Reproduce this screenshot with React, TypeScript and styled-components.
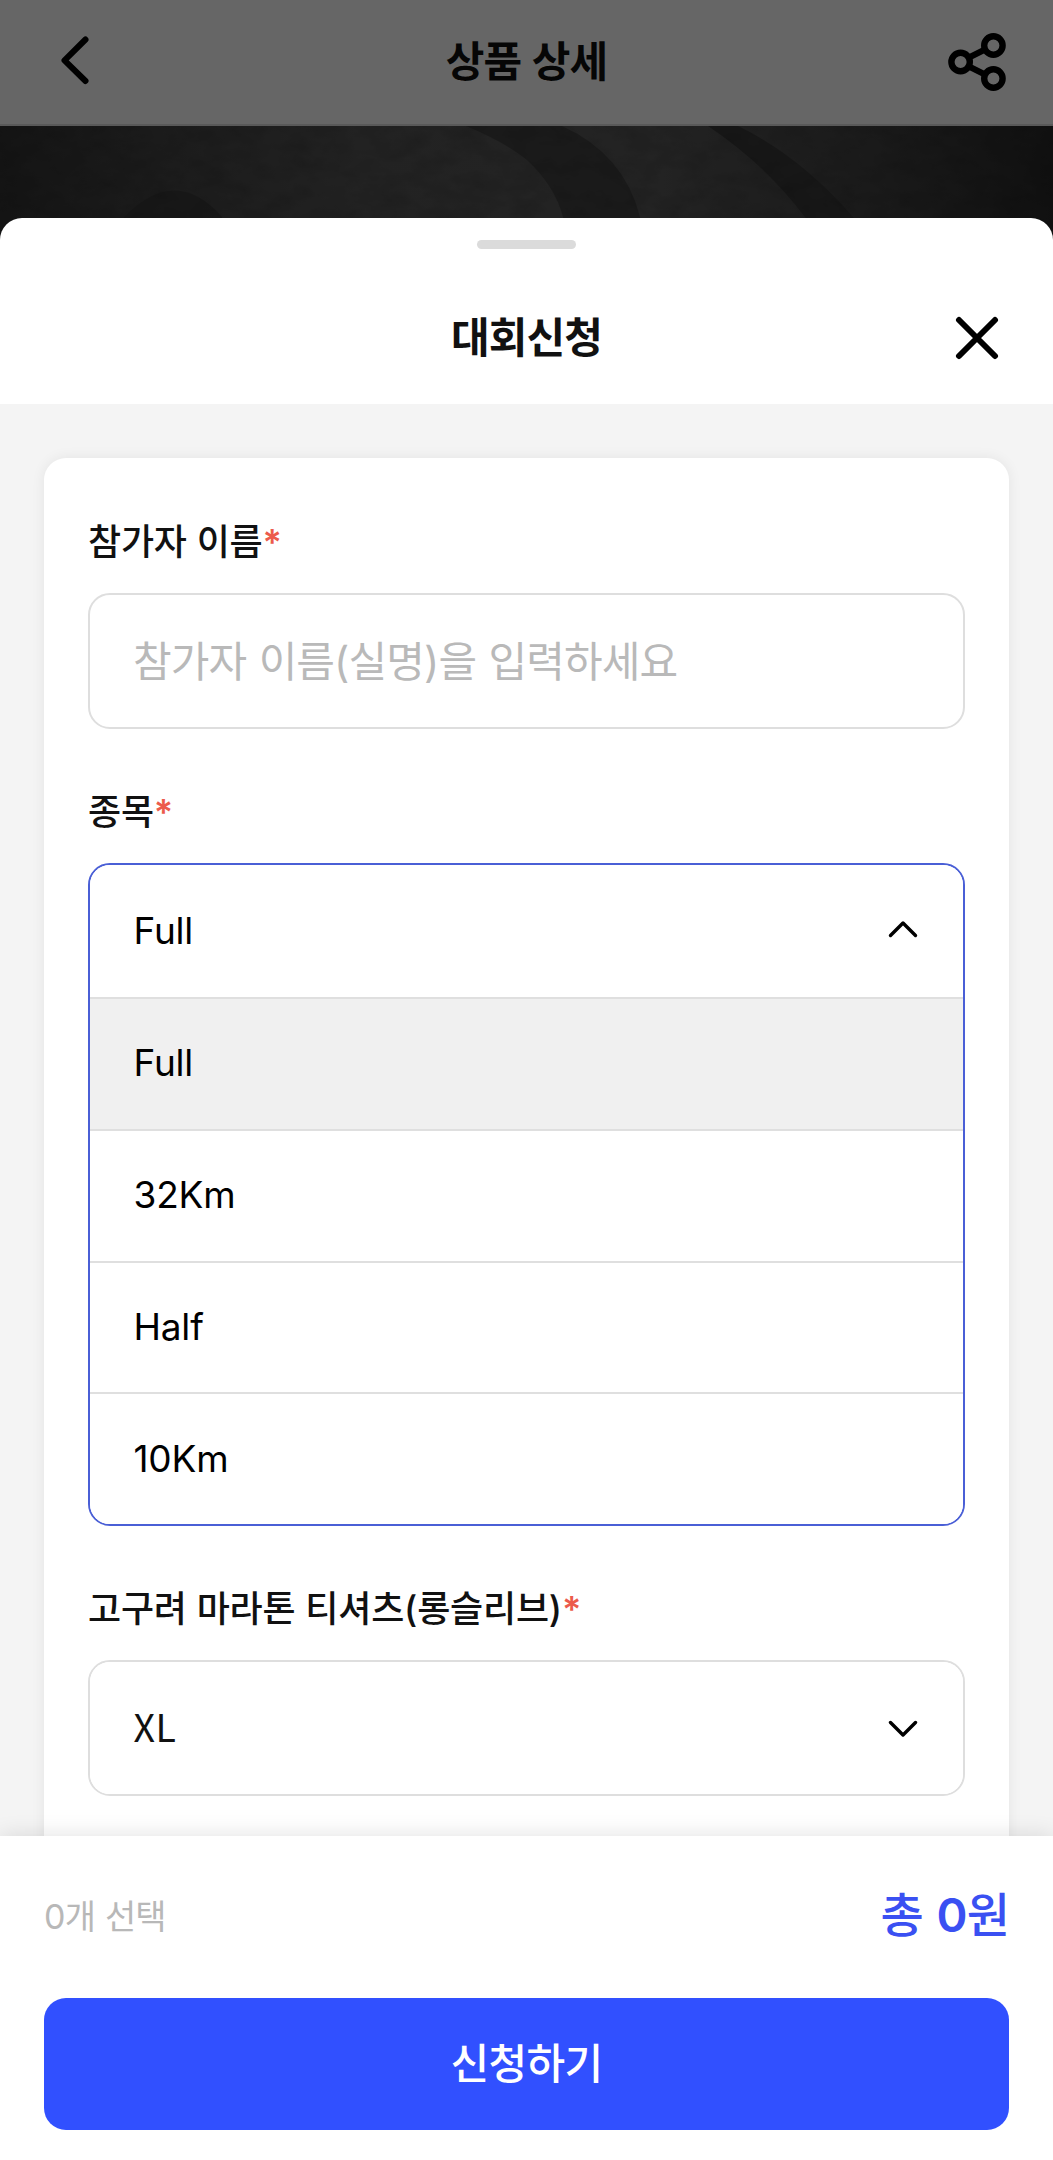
import React, { useState } from "react";
import styled, { createGlobalStyle, css } from "styled-components";

const GlobalStyle = createGlobalStyle`
  * { box-sizing: border-box; }
  body {
    margin: 0;
    background: #ffffff;
    font-family: Inter, "Noto Sans CJK KR", sans-serif;
    color: #111111;
  }
  button, input { font-family: inherit; color: inherit; }
`;

const Screen = styled.div`
  width: 1053px;
  height: 2160px;
  display: flex;
  flex-direction: column;
  overflow: hidden;
  background: #fff;
`;

const Backdrop = styled.div`
  position: relative;
  flex: none;
  height: 250px;
  &::after {
    content: "";
    position: absolute;
    inset: 0;
    background: rgba(0, 0, 0, 0.6);
  }
`;

const TopBar = styled.header`
  height: 126px;
  display: grid;
  grid-template-columns: 150px 1fr 150px;
  align-items: center;
  background: #fff;
  border-bottom: 2px solid #dedede;
`;

const IconButton = styled.button<{ $side: "left" | "right"; $inset: number }>`
  border: 0;
  padding: 0;
  background: none;
  display: flex;
  justify-content: ${(p) => (p.$side === "left" ? "flex-start" : "flex-end")};
  padding-${(p) => p.$side}: ${(p) => p.$inset}px;
`;

const BarTitle = styled.h1`
  margin: 0;
  text-align: center;
  font-size: 42px;
  line-height: 60px;
  font-weight: 700;
  letter-spacing: -0.9px;
  word-spacing: 1.5px;
`;

const Hero = styled.svg`
  display: block;
  width: 1053px;
  height: 124px;
`;

const Sheet = styled.section`
  position: relative;
  flex: 1;
  min-height: 0;
  margin-top: -32.5px;
  display: flex;
  flex-direction: column;
  background: #fff;
  border-radius: 22px 22px 0 0;
  overflow: hidden;
`;

const SheetHeader = styled.div`
  flex: none;
  height: 186.5px;
  padding-top: 22.5px;
  display: flex;
  flex-direction: column;
  align-items: center;
`;

const Handle = styled.div`
  width: 99px;
  height: 9px;
  border-radius: 5px;
  background: #dbdbdb;
`;

const SheetTitleRow = styled.div`
  width: 100%;
  margin-top: 59px;
  display: grid;
  grid-template-columns: 150px 1fr 150px;
  align-items: center;
`;

const SheetTitle = styled(BarTitle).attrs({ as: "h2" })`
  grid-column: 2;
`;

const SheetBody = styled.div`
  flex: 1;
  min-height: 0;
  overflow: hidden;
  padding: 54px 44px 0;
  background: #f4f4f4;
`;

const Card = styled.div`
  height: 1500px;
  padding: 60px 44px;
  background: #fff;
  border-radius: 22px;
  box-shadow: 0 0 14px rgba(0, 0, 0, 0.07);
`;

const Field = styled.div`
  display: flex;
  flex-direction: column;
  margin-bottom: 59px;
`;

const Label = styled.label`
  height: 48px;
  margin-bottom: 27px;
  font-size: 36px;
  line-height: 48px;
  font-weight: 500;
  letter-spacing: -0.2px;
  word-spacing: 0.5px;
  white-space: nowrap;
`;

const Required = styled.span`
  color: #ec5b4c;
  font-weight: 600;
`;

const TextInput = styled.input`
  width: 100%;
  height: 136px;
  padding: 0 43px;
  border: 2px solid #dedede;
  border-radius: 22px;
  outline: none;
  background: #fff;
  font-size: 42px;
  letter-spacing: -0.9px;
  word-spacing: 1.5px;
  &::placeholder {
    color: #b9b9b9;
    opacity: 1;
  }
`;

const SelectBox = styled.div<{ $open: boolean }>`
  border: 2px solid ${(p) => (p.$open ? "#4a5fd6" : "#dedede")};
  border-radius: 22px;
  background: #fff;
  overflow: hidden;
`;

const rowText = css`
  width: 100%;
  display: flex;
  align-items: center;
  border: 0;
  padding: 0 45px 2px 43.5px;
  color: #000;
  font-size: 37px;
  letter-spacing: -0.2px;
  text-align: left;
`;

const SelectHead = styled.button`
  ${rowText}
  height: 132px;
  justify-content: space-between;
  background: #fff;
`;

const SizeValue = styled.span`
  font-family: "Noto Sans CJK KR", sans-serif;
  font-size: 37.5px;
  letter-spacing: 0.4px;
  line-height: 50px;
  padding-bottom: 3px;
  color: #111;
`;

const Option = styled.button<{ $selected: boolean }>`
  ${rowText}
  height: 131.75px;
  border-top: 2px solid #dfdfdf;
  background: ${(p) => (p.$selected ? "#f0f0f0" : "#fff")};
`;

const Footer = styled.footer`
  position: relative;
  flex: none;
  height: 324px;
  padding: 48px 44px 30px;
  display: flex;
  flex-direction: column;
  justify-content: space-between;
  background: #fff;
  box-shadow: 0 0 22px rgba(0, 0, 0, 0.12);
`;

const Summary = styled.div`
  display: flex;
  align-items: center;
  justify-content: space-between;
  height: 60px;
`;

const Count = styled.span`
  font-size: 34px;
  font-weight: 400;
  letter-spacing: -0.8px;
  word-spacing: 1px;
  color: #b8b8b8;
`;

const Total = styled.strong`
  font-size: 47px;
  line-height: 58px;
  font-weight: 500;
  letter-spacing: -0.9px;
  word-spacing: 2px;
  padding-top: 2px;
  color: #3a50f2;
`;

const Amount = styled.span`
  font-weight: 600;
`;

const Submit = styled.button`
  height: 132px;
  border: 0;
  border-radius: 22px;
  padding: 0 0 7px;
  background: #3150ff;
  color: #fff;
  font-size: 42px;
  font-weight: 500;
  letter-spacing: -0.7px;
`;

const BackIcon = () => (
  <svg width="30" height="54" viewBox="0 0 30 54" fill="none" stroke="#000" strokeWidth="6" strokeLinecap="round" strokeLinejoin="round">
    <path d="M25.5 4.5 4.5 25.3 25.5 46" />
  </svg>
);

const ShareIcon = () => (
  <svg width="60" height="60" viewBox="0 0 60 60" fill="none" stroke="#000" strokeWidth="6.4">
    <path d="M22 25.5 37 18M22 34.5 37 42" />
    <circle cx="13.6" cy="30" r="9.2" />
    <circle cx="46.4" cy="13.5" r="9.2" />
    <circle cx="46.4" cy="46.5" r="9.2" />
  </svg>
);

const CloseIcon = () => (
  <svg width="44" height="44" viewBox="0 0 44 44" fill="none" stroke="#000" strokeWidth="6" strokeLinecap="round">
    <path d="M4 4 40 40M40 4 4 40" />
  </svg>
);

const Chevron = ({ up }: { up: boolean }) => (
  <svg width="30" height="20" viewBox="0 0 30 20" fill="none" stroke="#000" strokeWidth="3.4" strokeLinecap="round" strokeLinejoin="round">
    <path d={up ? "M2.5 15.5 15 3 27.5 15.5" : "M2.5 5.5 15 18 27.5 5.5"} />
  </svg>
);

const HeroArt = () => (
  <Hero viewBox="0 0 1053 124" preserveAspectRatio="none">
    <defs>
      <linearGradient id="stone" x1="0" x2="1" y1="0" y2="0">
        <stop offset="0" stopColor="#343434" />
        <stop offset="0.18" stopColor="#484848" />
        <stop offset="0.35" stopColor="#565656" />
        <stop offset="0.62" stopColor="#585858" />
        <stop offset="0.8" stopColor="#464646" />
        <stop offset="1" stopColor="#2a2a2a" />
      </linearGradient>
      <filter id="grain" x="0" y="0" width="100%" height="100%">
        <feTurbulence type="fractalNoise" baseFrequency="0.035 0.06" numOctaves="4" seed="7" />
        <feColorMatrix values="0 0 0 0 0  0 0 0 0 0  0 0 0 0 0  0.9 0 0 0 -0.32" />
      </filter>
    </defs>
    <rect width="1053" height="124" fill="url(#stone)" />
    <path d="M466 0Q505 16 527 34Q555 60 563 91L566 124H644L640 91Q624 28 562 0Z" fill="#434343" />
    <path d="M708 0Q765 38 805 91L825 124H878L853 91Q800 30 738 0Z" fill="#3a3a3a" />
    <path d="M124 91Q176 38 222 91V124H124Z" fill="#383838" opacity="0.8" />
    <rect width="1053" height="124" filter="url(#grain)" opacity="0.25" />
  </Hero>
);

const EVENTS = ["Full", "32Km", "Half", "10Km"];

export default function App() {
  const [name, setName] = useState("");
  const [event, setEvent] = useState("Full");
  const [open, setOpen] = useState(true);

  return (
    <>
      <GlobalStyle />
      <Screen>
        <Backdrop>
          <TopBar>
            <IconButton $side="left" $inset={60} aria-label="뒤로">
              <BackIcon />
            </IconButton>
            <BarTitle>상품 상세</BarTitle>
            <IconButton $side="right" $inset={46} aria-label="공유">
              <ShareIcon />
            </IconButton>
          </TopBar>
          <HeroArt />
        </Backdrop>
        <Sheet>
          <SheetHeader>
            <Handle />
            <SheetTitleRow>
              <SheetTitle>대회신청</SheetTitle>
              <IconButton $side="right" $inset={54} aria-label="닫기">
                <CloseIcon />
              </IconButton>
            </SheetTitleRow>
          </SheetHeader>
          <SheetBody>
            <Card>
              <Field>
                <Label>참가자 이름<Required>*</Required></Label>
                <TextInput
                  value={name}
                  onChange={(e) => setName(e.target.value)}
                  placeholder="참가자 이름(실명)을 입력하세요"
                />
              </Field>
              <Field>
                <Label>종목<Required>*</Required></Label>
                <SelectBox $open={open}>
                  <SelectHead onClick={() => setOpen(!open)}>
                    {event}
                    <Chevron up={open} />
                  </SelectHead>
                  {open &&
                    EVENTS.map((item) => (
                      <Option key={item} $selected={item === event} onClick={() => setEvent(item)}>
                        {item}
                      </Option>
                    ))}
                </SelectBox>
              </Field>
              <Field>
                <Label>고구려 마라톤 티셔츠(롱슬리브)<Required>*</Required></Label>
                <SelectBox $open={false}>
                  <SelectHead>
                    <SizeValue>XL</SizeValue>
                    <Chevron up={false} />
                  </SelectHead>
                </SelectBox>
              </Field>
            </Card>
          </SheetBody>
          <Footer>
            <Summary>
              <Count>0개 선택</Count>
              <Total>총 <Amount>0</Amount>원</Total>
            </Summary>
            <Submit>신청하기</Submit>
          </Footer>
        </Sheet>
      </Screen>
    </>
  );
}
